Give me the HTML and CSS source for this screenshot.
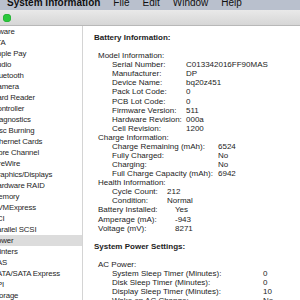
FILE: index.html
```html
<!DOCTYPE html>
<html>
<head>
<meta charset="utf-8">
<link rel="stylesheet" href="styles.css">
</head>
<body>
<div class="screen">
  <div class="menubar">
    <span class="menu-app">System Information</span>
    <span class="menu-item">File</span>
    <span class="menu-item">Edit</span>
    <span class="menu-item">Window</span>
    <span class="menu-item">Help</span>
  </div>
  <div class="titlebar">
    <span class="light green"></span>
  </div>
  <div class="main">
    <div class="sidebar">
      <ul class="tree">
        <li class="node">Hardware</li>
        <li class="leaf">ATA</li>
        <li class="leaf">Apple Pay</li>
        <li class="leaf">Audio</li>
        <li class="leaf">Bluetooth</li>
        <li class="leaf">Camera</li>
        <li class="leaf">Card Reader</li>
        <li class="leaf">Controller</li>
        <li class="leaf">Diagnostics</li>
        <li class="leaf">Disc Burning</li>
        <li class="leaf">Ethernet Cards</li>
        <li class="leaf">Fibre Channel</li>
        <li class="leaf">FireWire</li>
        <li class="leaf">Graphics/Displays</li>
        <li class="leaf">Hardware RAID</li>
        <li class="leaf">Memory</li>
        <li class="leaf">NVMExpress</li>
        <li class="leaf">PCI</li>
        <li class="leaf">Parallel SCSI</li>
        <li class="leaf selected">Power</li>
        <li class="leaf">Printers</li>
        <li class="leaf">SAS</li>
        <li class="leaf">SATA/SATA Express</li>
        <li class="leaf">SPI</li>
        <li class="leaf">Storage</li>
      </ul>
    </div>
    <div class="content">
      <div class="heading">Battery Information:</div>
      <div class="blank"></div>
      <div class="group">
        <div class="group-title">Model Information:</div>
        <div class="kv cols-model">
          <span>Serial Number:</span><span>C013342016FF90MAS</span>
          <span>Manufacturer:</span><span>DP</span>
          <span>Device Name:</span><span>bq20z451</span>
          <span>Pack Lot Code:</span><span>0</span>
          <span>PCB Lot Code:</span><span>0</span>
          <span>Firmware Version:</span><span>511</span>
          <span>Hardware Revision:</span><span>000a</span>
          <span>Cell Revision:</span><span>1200</span>
        </div>
      </div>
      <div class="group">
        <div class="group-title">Charge Information:</div>
        <div class="kv cols-charge">
          <span>Charge Remaining (mAh):</span><span>6524</span>
          <span>Fully Charged:</span><span>No</span>
          <span>Charging:</span><span>No</span>
          <span>Full Charge Capacity (mAh):</span><span>6942</span>
        </div>
      </div>
      <div class="group">
        <div class="group-title">Health Information:</div>
        <div class="kv cols-health">
          <span>Cycle Count:</span><span>212</span>
          <span>Condition:</span><span>Normal</span>
        </div>
      </div>
      <div class="kv top cols-top">
        <span>Battery Installed:</span><span>Yes</span>
        <span>Amperage (mA):</span><span>-943</span>
        <span>Voltage (mV):</span><span>8271</span>
      </div>
      <div class="blank"></div>
      <div class="heading">System Power Settings:</div>
      <div class="blank"></div>
      <div class="group">
        <div class="group-title">AC Power:</div>
        <div class="kv cols-power">
          <span>System Sleep Timer (Minutes):</span><span>0</span>
          <span>Disk Sleep Timer (Minutes):</span><span>0</span>
          <span>Display Sleep Timer (Minutes):</span><span>10</span>
          <span>Wake on AC Change:</span><span>No</span>
        </div>
      </div>
    </div>
  </div>
</div>
</body>
</html>
```
FILE: styles.css
```css
* { box-sizing: border-box; }
html, body {
  margin: 0;
  padding: 0;
  width: 300px;
  height: 300px;
  overflow: hidden;
  background: #ffffff;
}
.screen {
  width: 300px;
  height: 300px;
  display: flex;
  flex-direction: column;
  overflow: hidden;
  font-family: "Liberation Sans", Arial, sans-serif;
}
.menubar {
  height: 10px;
  flex: none;
  background: #b9c0cd;
  display: flex;
  align-items: flex-end;
  gap: 13px;
  padding-left: 7px;
  font-size: 10px;
  line-height: 10px;
  color: #111;
  overflow: hidden;
}
.menubar span {
  position: relative;
  top: -2px;
  white-space: nowrap;
}
.menu-app { font-weight: bold; }
.titlebar {
  height: 16px;
  flex: none;
  background: linear-gradient(#e9e9e9, #d6d6d6);
  border-bottom: 1px solid #b8b8b8;
  display: flex;
  align-items: center;
  padding-left: 3px;
}
.light {
  width: 8px;
  height: 8px;
  border-radius: 50%;
}
.green {
  background: #2ac83c;
  box-shadow: inset 0 0 0 0.5px #1fa62d;
}
.main {
  flex: 1;
  display: flex;
  min-height: 0;
}
.sidebar {
  width: 83px;
  flex: none;
  border-right: 1px solid #d4d4d4;
  background: #ffffff;
  overflow: hidden;
}
.tree {
  list-style: none;
  margin: 0 0 0 -18px;
  padding: 0;
  font-size: 7.8px;
  letter-spacing: -0.15px;
  line-height: 11px;
  color: #262626;
}
.tree li {
  height: 11px;
  white-space: nowrap;
}
.tree .leaf { padding-left: 10px; }
.tree .selected {
  background: #dcdcdc;
  margin-right: -1px;
}
.content {
  flex: 1;
  padding: 7px 0 0 11px;
  font-size: 8px;
  line-height: 9.08px;
  color: #1c1c1c;
  overflow: hidden;
  white-space: nowrap;
}
.heading {
  font-weight: bold;
  height: 9.08px;
}
.blank { height: 9.08px; }
.group-title { padding-left: 4px; }
.kv {
  display: grid;
  padding-left: 18px;
}
.kv.top { padding-left: 4px; }
.cols-model { grid-template-columns: 74px auto; }
.cols-charge { grid-template-columns: 106px auto; }
.cols-health { grid-template-columns: 55px auto; }
.cols-top { grid-template-columns: 77px auto; }
.cols-power { grid-template-columns: 151px auto; }
```
